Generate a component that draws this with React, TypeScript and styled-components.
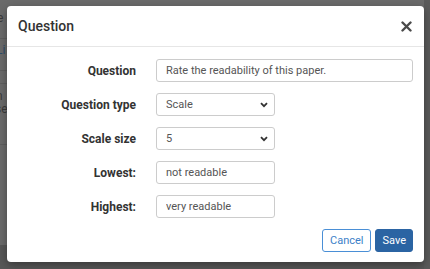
import React from "react";
import styled, { createGlobalStyle } from "styled-components";

const Global = createGlobalStyle`
  html, body { margin: 0; padding: 0; }
  body {
    width: 430px;
    height: 269px;
    overflow: hidden;
    background: #575757;
    font-family: Roboto, "Liberation Sans", Arial, sans-serif;
  }
`;

const Page = styled.div`
  position: relative;
  width: 430px;
  height: 269px;
  background: linear-gradient(to bottom, #6a6a6a 0, #6a6a6a 245px, #575757 245px);
`;

const BehindText = styled.div<{ $top: number; $left: number; $color?: string }>`
  position: absolute;
  top: ${(p) => p.$top}px;
  left: ${(p) => p.$left}px;
  font-size: 12px;
  line-height: 12px;
  color: ${(p) => p.$color || "#3a3a3a"};
`;

const BehindLine = styled.div<{ $top: number }>`
  position: absolute;
  top: ${(p) => p.$top}px;
  left: 0;
  width: 430px;
  height: 1px;
  background: #5e5e5e;
`;

const RightStrip = styled.div`
  position: absolute;
  top: 0;
  right: 0;
  width: 6px;
  height: 269px;
  background: #5a5a5a;
`;

const Modal = styled.div`
  position: absolute;
  top: 6px;
  left: 7px;
  width: 417px;
  height: 256px;
  background: #fff;
  border-radius: 4px;
  box-shadow: 0 3px 8px rgba(0, 0, 0, 0.35);
  display: flex;
  flex-direction: column;
`;

const Header = styled.div`
  height: 40px;
  border-bottom: 1px solid #e6e6e6;
  display: flex;
  align-items: center;
  justify-content: space-between;
  padding: 0 12px 0 11px;
`;

const Title = styled.div`
  font-size: 14px;
  font-weight: 500;
  color: #333;
`;

const Close = styled.button`
  border: none;
  background: none;
  padding: 0;
  width: 11px;
  height: 11px;
  display: flex;
  align-items: center;
  justify-content: center;
  cursor: pointer;
`;

const Body = styled.div`
  padding: 12px 11px 0 0;
  display: flex;
  flex-direction: column;
  gap: 11px;
`;

const Row = styled.div`
  display: grid;
  grid-template-columns: 129px auto;
  column-gap: 20px;
  align-items: center;
  height: 23px;
`;

const Label = styled.label`
  text-align: right;
  font-size: 12px;
  font-weight: 700;
  color: #333;
`;

const Input = styled.input<{ $w?: number }>`
  box-sizing: border-box;
  width: ${(p) => (p.$w ? `${p.$w}px` : "100%")};
  height: 23px;
  border: 1px solid #cccccc;
  border-radius: 3px;
  padding: 0 9px;
  font-family: Roboto, "Liberation Sans", Arial, sans-serif;
  font-size: 11px;
  color: #555;
  background: #fff;
  outline: none;
`;

const SelectBox = styled.div`
  position: relative;
  width: 119px;
  height: 23px;
`;

const Select = styled.select`
  box-sizing: border-box;
  width: 119px;
  height: 23px;
  border: 1px solid #cccccc;
  border-radius: 3px;
  padding: 0 0 0 9px;
  font-family: Roboto, "Liberation Sans", Arial, sans-serif;
  font-size: 11px;
  color: #555;
  background: #fff;
  appearance: none;
  outline: none;
`;

const Chevron = styled.svg`
  position: absolute;
  right: 7px;
  top: 9px;
  pointer-events: none;
`;

const Footer = styled.div`
  margin-top: 11px;
  padding-right: 11px;
  display: flex;
  justify-content: flex-end;
  gap: 4px;
`;

const Button = styled.button<{ $primary?: boolean }>`
  box-sizing: border-box;
  height: 23px;
  padding: 0 ${(p) => (p.$primary ? "6px" : "7px")};
  border-radius: 3px;
  font-family: Roboto, "Liberation Sans", Arial, sans-serif;
  font-size: 11px;
  border: 1px solid ${(p) => (p.$primary ? "#2b64a3" : "#4a8fd6")};
  background: ${(p) => (p.$primary ? "#2b64a3" : "#fff")};
  color: ${(p) => (p.$primary ? "#fff" : "#3c7fc8")};
  cursor: pointer;
`;

const ChevronIcon = () => (
  <Chevron width="8" height="6" viewBox="0 0 8 6">
    <path d="M1 1.2 L4 4.2 L7 1.2" fill="none" stroke="#333" strokeWidth="1.8" />
  </Chevron>
);

export default function App() {
  return (
    <>
      <Global />
      <Page>
        <BehindText $top={12} $left={-3}>e</BehindText>
        <BehindLine $top={38} />
        <BehindText $top={44} $left={-4} $color="#2e4d6b">Li</BehindText>
        <BehindLine $top={70} />
        <BehindLine $top={83} />
        <BehindText $top={90} $left={-4}>n</BehindText>
        <BehindText $top={103} $left={-5}>se</BehindText>
        <BehindLine $top={144} />
        <RightStrip />
        <Modal>
          <Header>
            <Title>Question</Title>
            <Close aria-label="Close">
              <svg width="11" height="11" viewBox="0 0 11 11">
                <path d="M1.5 1.5 L9.5 9.5 M9.5 1.5 L1.5 9.5" stroke="#4a4a4a" strokeWidth="2.4" strokeLinecap="round" />
              </svg>
            </Close>
          </Header>
          <Body>
            <Row>
              <Label>Question</Label>
              <Input defaultValue="Rate the readability of this paper." />
            </Row>
            <Row>
              <Label>Question type</Label>
              <SelectBox>
                <Select defaultValue="Scale">
                  <option>Scale</option>
                </Select>
                <ChevronIcon />
              </SelectBox>
            </Row>
            <Row>
              <Label>Scale size</Label>
              <SelectBox>
                <Select defaultValue="5">
                  <option>5</option>
                </Select>
                <ChevronIcon />
              </SelectBox>
            </Row>
            <Row>
              <Label>Lowest:</Label>
              <Input $w={119} defaultValue="not readable" />
            </Row>
            <Row>
              <Label>Highest:</Label>
              <Input $w={119} defaultValue="very readable" />
            </Row>
          </Body>
          <Footer>
            <Button>Cancel</Button>
            <Button $primary>Save</Button>
          </Footer>
        </Modal>
      </Page>
    </>
  );
}
